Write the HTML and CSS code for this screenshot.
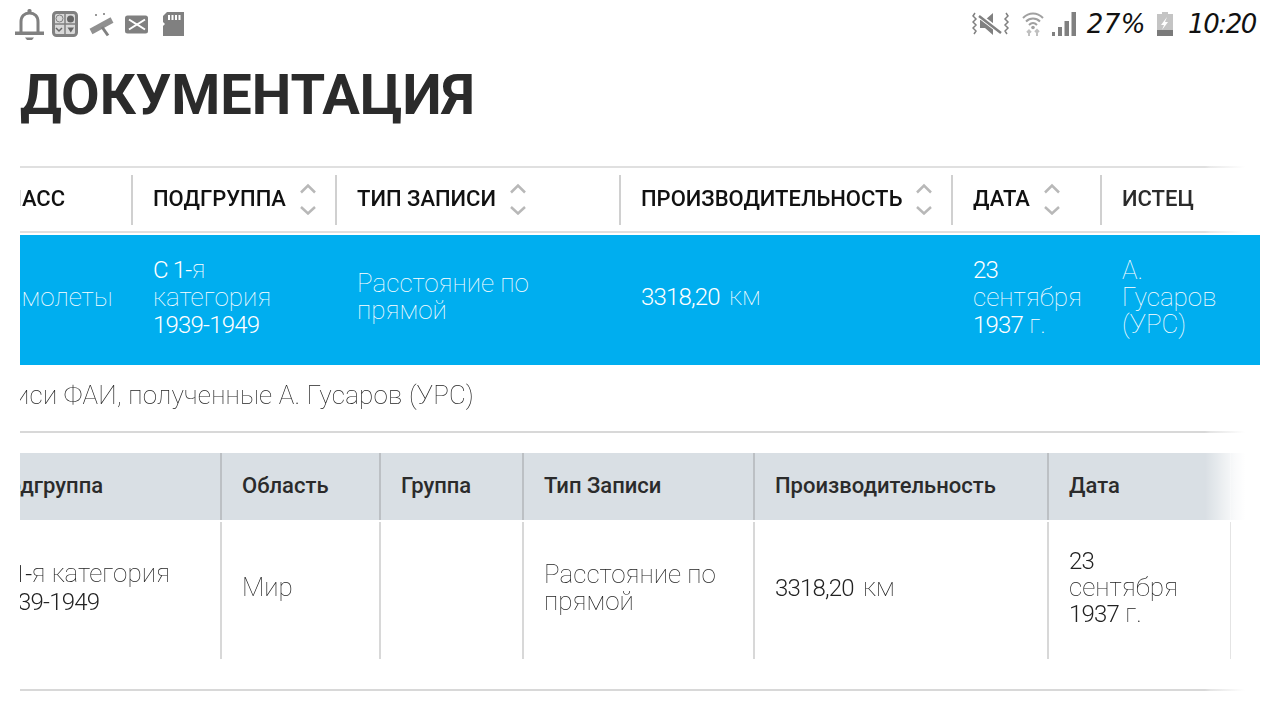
FILE: index.html
```html
<!DOCTYPE html>
<html lang="ru">
<head>
<meta charset="utf-8">
<title>Документация</title>
<link rel="stylesheet" href="styles.css">
</head>
<body>
<div class="statusbar">
  <div class="status-left">
    <svg class="ic" width="29" height="34" viewBox="0 0 29 34"><path d="M6 25V15c0-6 3.500-9 8.500-9s8.500 3 8.500 9v10" fill="none" stroke="#808080" stroke-width="3"/><rect x="12.500" y="2" width="4" height="5" rx="1.500" fill="#808080"/><rect x="0" y="24.500" width="29" height="3.500" fill="#808080"/><path d="M10 30.500h9l-2 2.500h-5z" fill="#808080"/></svg>
    <svg class="ic" width="26" height="26" viewBox="0 0 26 26"><rect x="1.500" y="1.500" width="23" height="23" rx="3" fill="#d8d8d8" stroke="#808080" stroke-width="3"/><path d="M13 2v22M2 13h22" stroke="#808080" stroke-width="1.500"/><circle cx="7.500" cy="7.500" r="3.500" fill="none" stroke="#808080"/><circle cx="18.500" cy="8" r="3.500" fill="#666"/><path d="M4 17l3 3 3-3" fill="none" stroke="#666" stroke-width="1.500"/><path d="M15.500 16.500h6.500l-3.200 5z" fill="#666"/></svg>
    <svg class="ic" width="30" height="26" viewBox="0 0 30 26"><path d="M5 20.500L26 9" stroke="#909090" stroke-width="6"/><path d="M16 16l6 8.500" stroke="#808080" stroke-width="3"/><path d="M9 3l2 2M11 3l-2 2M17 2l2 2M19 2l-2 2" stroke="#999" stroke-width="1"/></svg>
    <svg class="ic" width="26" height="19" viewBox="0 0 26 19"><rect x="1" y="0.500" width="23" height="18" rx="2.500" fill="#808080"/><path d="M5 4.500l8 5 8-5M5 14.500l8-5 8 5" fill="none" stroke="#fff" stroke-width="2"/></svg>
    <svg class="ic" width="26" height="24" viewBox="0 0 26 24"><path d="M9 0h17v24H5V14l2-2-2-2V4z" fill="#808080"/><path d="M11 3v5M14.500 3v5M18 3v5M21.500 3v5" stroke="#fff" stroke-width="2"/></svg>
  </div>
  <div class="status-right">
    <svg class="ic" width="39" height="24" viewBox="0 0 39 24"><path d="M3 1L1 4l3 3-3 3 3 3-3 3 3 3-2 3M34 1l2 3-3 3 3 3-3 3 3 3-3 3 2 3" fill="none" stroke="#808080" stroke-width="1.500"/><path d="M8 8h5l8-7v22l-8-7H8z" fill="#808080"/><path d="M5 2l26 20" stroke="#fff" stroke-width="5"/><path d="M7 4l22 17" stroke="#808080" stroke-width="2.500"/></svg>
    <svg class="ic" width="22" height="26" viewBox="0 0 22 26"><path d="M1 7c6-6 14-6 20 0M4 10.500c4-4 10-4 14 0M7 14c2.500-2.500 5.500-2.500 8 0" fill="none" stroke="#a0a0a0" stroke-width="2"/><circle cx="11" cy="16.500" r="1.800" fill="#a0a0a0"/><path d="M7 25v-5M5 21.500l2-2 2 2M15 19v6M13 21l2-2 2 2" fill="none" stroke="#c0c0c0" stroke-width="2"/></svg>
    <svg class="ic signal" width="24" height="24" viewBox="0 0 24 24"><path d="M0 20h3v4H0zM6 15h4v9H6zM12.500 9h4.500v15h-4.500zM19.500 0H24v24h-4.500z" fill="#808080"/></svg>
    <span class="clock pct">27%</span>
    <svg class="ic" width="16" height="24" viewBox="0 0 16 24"><path d="M5 0h6v2h5v22H0V2h5z" fill="#c4c4c4"/><rect y="18" width="16" height="6" fill="#7a7a7a"/><path d="M10 5L4 13h3l-2 5 6-8H8z" fill="#fff"/></svg>
    <span class="clock time">10:20</span>
  </div>
</div>

<h1 class="title">ДОКУМЕНТАЦИЯ</h1>

<section class="table-one">
  <div class="rule rule-light"></div>
  <div class="head-row">
    <div class="th w-class"><span class="clip">КЛАСС</span></div>
    <div class="th w-sub">ПОДГРУППА <svg class="sort" width="18" height="34" viewBox="0 0 18 34"><path d="M2 11.500l7-7 7 7"/><path d="M2 26l7 6.500 7-6.500"/></svg></div>
    <div class="th w-type">ТИП ЗАПИСИ <svg class="sort" width="18" height="34" viewBox="0 0 18 34"><path d="M2 11.500l7-7 7 7"/><path d="M2 26l7 6.500 7-6.500"/></svg></div>
    <div class="th w-perf">ПРОИЗВОДИТЕЛЬНОСТЬ <svg class="sort" width="18" height="34" viewBox="0 0 18 34"><path d="M2 11.500l7-7 7 7"/><path d="M2 26l7 6.500 7-6.500"/></svg></div>
    <div class="th w-date">ДАТА <svg class="sort" width="18" height="34" viewBox="0 0 18 34"><path d="M2 11.500l7-7 7 7"/><path d="M2 26l7 6.500 7-6.500"/></svg></div>
    <div class="th w-plain">ИСТЕЦ</div>
  </div>
  <div class="rule rule-light"></div>
  <div class="blue-row">
    <div class="td w-class"><span class="clip">Самолеты</span></div>
    <div class="td w-sub"><span class="d">С 1-</span>я категория <span class="d">1939-1949</span></div>
    <div class="td w-type">Расстояние по прямой</div>
    <div class="td w-perf"><span class="d">3318,20</span> км</div>
    <div class="td w-date"><span class="d">23</span> сентября <span class="d">1937</span> г.</div>
    <div class="td w-plain">А. Гусаров (УРС)</div>
  </div>
</section>

<p class="caption"><span class="caption-in">Записи ФАИ, полученные А. Гусаров (УРС)</span></p>
<div class="rule rule-page"></div>

<section class="table-two">
  <div class="grey-row">
    <div class="gh c-sub"><span class="clip2">Подгруппа</span></div>
    <div class="gh c-area">Область</div>
    <div class="gh c-group">Группа</div>
    <div class="gh c-type">Тип Записи</div>
    <div class="gh c-perf">Производительность</div>
    <div class="gh c-date">Дата</div>
    <div class="fade"></div>
  </div>
  <div class="data-row">
    <div class="gd c-sub"><div class="clip3"><span class="d">С 1-</span>я категория<br><span class="d">1939-1949</span></div></div>
    <div class="gd c-area"><div>Мир</div></div>
    <div class="gd c-group"></div>
    <div class="gd c-type"><div>Расстояние по прямой</div></div>
    <div class="gd c-perf"><div><span class="d">3318,20</span> км</div></div>
    <div class="gd c-date"><div><span class="d">23</span> сентября <span class="d">1937</span> г.</div></div>
  </div>
</section>
<div class="rule rule-page rule-last"></div>
</body>
</html>
```
FILE: styles.css
```css
* { box-sizing: border-box; }
html, body { margin: 0; padding: 0; }
body {
  width: 1280px;
  height: 720px;
  overflow: hidden;
  background: #fff;
  font-family: Roboto, "Liberation Sans", sans-serif;
  color: #2b2b2b;
}
.statusbar {
  height: 48px;
  display: flex;
  justify-content: space-between;
  align-items: center;
  padding: 0 24px 0 15px;
}
.status-left { display: flex; align-items: center; gap: 8px; }
.status-right { display: flex; align-items: center; gap: 11px; }
.ic { display: block; flex: none; }
.signal { margin-left: -3px; }
.clock {
  font-family: "DejaVu Sans", sans-serif;
  color: #111;
  font-size: 26px;
  font-style: italic;
}
.pct { letter-spacing: 0.500px; }
.time { margin-left: 4px; letter-spacing: -1.400px; }
.title {
  margin: 16px 0 0 20px;
  font-size: 56px;
  line-height: 62px;
  font-weight: 700;
  color: #2b2b2b;
}
.rule { height: 2px; }
.rule-light { background: linear-gradient(to right, #e0e0e0 calc(100% - 55px), rgba(224,224,224,0.700) calc(100% - 50px), rgba(224,224,224,0) calc(100% - 15px)); }
.rule-page {
  margin: 0 20px;
  background: linear-gradient(to right, #d8d8d8 calc(100% - 55px), rgba(216,216,216,0.700) calc(100% - 50px), rgba(216,216,216,0) calc(100% - 15px));
}
.rule-last { margin-top: 30px; }
.table-one { margin: 40px 20px 0; }
.head-row {
  display: flex;
  height: 63px;
  align-items: center;
  will-change: opacity;
}
.w-class { width: 113px; }
.w-sub { width: 204px; }
.w-type { width: 284px; }
.w-perf { width: 332px; word-spacing: 3px; }
.w-date { width: 149px; }
.w-plain { width: 158px; }
.th {
  height: 50px;
  display: flex;
  align-items: center;
  gap: 13px;
  padding: 0 0 3px 20px;
  border-right: 2px solid #d0d0d0;
  font-size: 22px;
  font-weight: 500;
  color: #111;
  white-space: nowrap;
}
.th.w-class { padding-left: 0; overflow: hidden; }
.th.w-plain { border-right: 0; color: #2b2b2b; }
.clip { display: block; margin-left: -28px; }
.sort { fill: none; stroke: #b8b8b8; stroke-width: 2.500; flex: none; }
.blue-row {
  display: flex;
  margin-top: 2px;
  height: 130px;
  padding-bottom: 6px;
  background: #00aeef;
  align-items: center;
  color: #fff;
  font-weight: 100;
  font-size: 26px;
  line-height: 27px;
}
.d { font-weight: 300; font-size: 24px; letter-spacing: -0.800px; }
.td { padding: 0 20px; }
.td.w-date { padding-right: 30px; }
.td.w-plain { padding-right: 50px; }
.td.w-class { padding: 0; overflow: hidden; white-space: nowrap; }
.td .clip { margin-left: -29px; }
.caption {
  margin: 0 20px;
  height: 66px;
  font-weight: 100;
  font-size: 26px;
  letter-spacing: 0.200px;
  line-height: 60px;
  color: #222;
  overflow: hidden;
  white-space: nowrap;
  will-change: opacity;
}
.caption-in { display: block; margin-left: -49px; }
.table-two { margin: 20px 20px 0; }
.grey-row {
  position: relative;
  display: flex;
  height: 67px;
  background: #d9dfe4;
}
.c-sub { width: 202px; }
.c-area { width: 159px; }
.c-group { width: 143px; }
.c-type { width: 231px; }
.c-perf { width: 294px; word-spacing: 3px; }
.c-date { width: 182px; }
.gh {
  display: flex;
  align-items: center;
  padding: 0 0 2px 20px;
  border-right: 2px solid #bcc0c4;
  font-size: 22px;
  font-weight: 500;
  color: #2b2b2b;
  white-space: nowrap;
}
.gh.c-sub { padding-left: 0; overflow: hidden; }
.gh.c-date { border-right: 1px solid #e4e8ec; }
.clip2 { display: block; margin-left: -27px; }
.fade {
  position: absolute;
  right: 0;
  top: 0;
  bottom: 0;
  width: 55px;
  background: linear-gradient(to right, rgba(255,255,255,0), rgba(255,255,255,0.850) 30px, #fff 40px);
}
.data-row {
  display: flex;
  height: 137px;
  margin-top: 2px;
  font-weight: 100;
  font-size: 26px;
  line-height: 27px;
  color: #222;
  will-change: opacity;
}
.gd {
  display: flex;
  align-items: center;
  padding: 0 20px 6px;
  border-right: 2px solid #d8d8d8;
}
.gd.c-sub { padding: 0 0 6px; overflow: hidden; white-space: nowrap; }
.gd.c-date { border-right: 1px solid #e4e4e4; padding: 0 40px 7px 20px; line-height: 26px; }
.clip3 { margin-left: -27px; }
```
